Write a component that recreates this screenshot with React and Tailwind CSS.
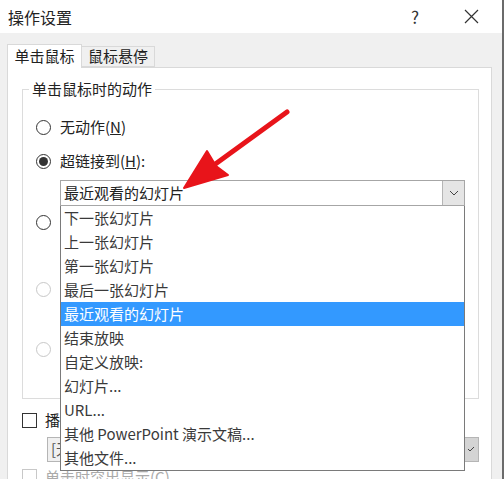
const font = { fontFamily: '"Noto Sans CJK SC", "Noto Sans", sans-serif' };

const items = [
  '下一张幻灯片',
  '上一张幻灯片',
  '第一张幻灯片',
  '最后一张幻灯片',
  '最近观看的幻灯片',
  '结束放映',
  '自定义放映:',
  '幻灯片...',
  'URL...',
  '其他 PowerPoint 演示文稿...',
  '其他文件...',
];

const Radio = ({ checked, disabled }) => (
  <span
    className={`w-[15px] h-[15px] rounded-full border flex items-center justify-center bg-white shrink-0 ${
      disabled ? 'border-[#c8c8c8]' : 'border-[#333]'
    }`}
  >
    {checked && <span className="w-[9px] h-[9px] rounded-full bg-[#333]" />}
  </span>
);

const Chevron = () => (
  <svg width="10" height="6" viewBox="0 0 10 6">
    <path d="M1 1 L5 5 L9 1" fill="none" stroke="#444" strokeWidth="1" />
  </svg>
);

export default function App() {
  return (
    <div
      className="relative w-[504px] h-[479px] overflow-hidden bg-[#f0f0f0] text-[#222] border-r-2 border-[#6b6b6b]"
      style={font}
    >
      {/* Title bar */}
      <div className="h-[33px] bg-white flex items-center pl-[8px] pr-[23px]">
        <span className="text-[16px] flex-1">操作设置</span>
        <span className="text-[17px] text-[#333] mr-[45px]">?</span>
        <svg width="15" height="15" viewBox="0 0 15 15">
          <path d="M1 1 L14 14 M14 1 L1 14" stroke="#333" strokeWidth="1.2" />
        </svg>
      </div>

      <div className="pl-[7px] pr-[10px] pt-[10px]">
        {/* Tabs */}
        <div className="flex items-end h-[24px]">
          <div className="h-[24px] w-[75px] bg-white border border-b-0 border-[#d9d9d9] flex items-center justify-center text-[15px] relative z-10 -mb-px">
            单击鼠标
          </div>
          <div className="h-[21px] w-[73px] bg-[#f0f0f0] border border-l-0 border-[#d9d9d9] flex items-center justify-center text-[15px]">
            鼠标悬停
          </div>
        </div>

        {/* Tab panel */}
        <div className="bg-white border border-[#d9d9d9] h-[420px] pl-[14px] pr-[12px] pt-[11px]">
          <fieldset className="border border-[#dcdcdc] h-[320px] p-0">
            <legend className="text-[15px] px-[3px] ml-[6px] leading-[20px]">单击鼠标时的动作</legend>
            <div className="flex flex-col text-[15px] pl-[13px] pr-[12px]">
              <div className="flex items-center gap-[9px] h-[20px] mt-[18px]">
                <Radio />
                <span>
                  无动作(<span className="underline">N</span>)
                </span>
              </div>
              <div className="flex items-center gap-[9px] h-[20px] mt-[14px]">
                <Radio checked />
                <span>
                  超链接到(<span className="underline">H</span>):
                </span>
              </div>

              {/* Combobox with open list */}
              <div className="relative ml-[24px] mt-[9px] w-[405px] z-20">
                <div className="h-[26px] border border-[#a6a6a6] flex items-center bg-white">
                  <span className="flex-1 pl-[3px] text-[15px] text-[#222]">最近观看的幻灯片</span>
                  <span className="w-[22px] h-full bg-[#e5e5e5] border-l border-[#b5b5b5] flex items-center justify-center">
                    <Chevron />
                  </span>
                </div>
                <div className="absolute left-0 top-full w-full bg-white border border-t-0 border-[#7a7a7a]">
                  {items.map((t, i) => (
                    <div
                      key={t}
                      className={`h-[24px] flex items-center pl-[3px] text-[15px] ${
                        i === 4 ? 'bg-[#3399ff] text-white' : 'text-[#3a3a3a]'
                      }`}
                    >
                      {t}
                    </div>
                  ))}
                </div>
              </div>

              <div className="flex items-center gap-[9px] h-[20px] mt-[6px]">
                <Radio />
                <span>运行程序(R):</span>
              </div>
              <div className="flex items-center gap-[9px] h-[20px] mt-[47px] text-[#aaa]">
                <Radio disabled />
                <span>运行宏(M):</span>
              </div>
              <div className="flex items-center gap-[9px] h-[20px] mt-[40px] text-[#aaa]">
                <Radio disabled />
                <span>对象动作(A):</span>
              </div>
            </div>
          </fieldset>

          {/* Sound */}
          <div className="flex items-center gap-[8px] mt-[10px] text-[15px]">
            <span className="w-[15px] h-[15px] border border-[#333] bg-white" />
            <span>播放声音(P):</span>
          </div>
          <div className="ml-[25px] mt-[5px] h-[25px] w-[432px] border border-[#b5b5b5] bg-[#f0f0f0] flex items-center">
            <span className="flex-1 pl-[3px] text-[15px] text-[#555]">[无声音]</span>
            <span className="w-[16px] h-full bg-[#d4d4d4] border-l border-[#aaa] flex items-center justify-center">
              <svg width="8" height="6" viewBox="0 0 8 6">
                <path d="M1 3 L3 5 L7 1" fill="none" stroke="#444" strokeWidth="1" />
              </svg>
            </span>
          </div>
          <div className="flex items-center gap-[8px] mt-[4px] text-[15px] text-[#aaa]">
            <span className="w-[15px] h-[15px] border border-[#c8c8c8] bg-white" />
            <span>单击时突出显示(C)</span>
          </div>
        </div>
      </div>

      {/* Red annotation arrow */}
      <svg className="absolute left-0 top-0 z-30 pointer-events-none" width="504" height="479">
        <line x1="287" y1="112" x2="214" y2="165" stroke="#e8141a" strokeWidth="5" strokeLinecap="round" />
        <path d="M184 188 L207 151 L216 166 L228 175 Z" fill="#e8141a" stroke="#e8141a" strokeWidth="2" strokeLinejoin="round" />
      </svg>
    </div>
  );
}
